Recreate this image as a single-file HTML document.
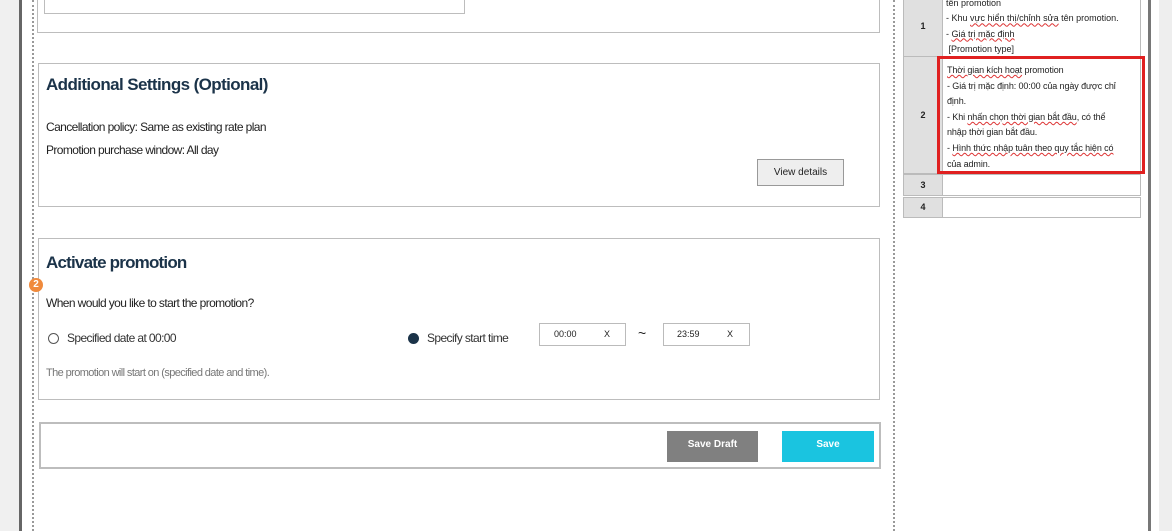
<!DOCTYPE html>
<html><head><style>
*{box-sizing:border-box}
body{margin:0;width:1172px;height:531px;position:relative;overflow:hidden;background:#fff;font-family:"Liberation Sans",sans-serif;color:#222}
.a{position:absolute}
.box{position:absolute;border:1px solid #bdbdbd;background:#fff}
.h{font-weight:bold;color:#1b3349;font-size:17px;letter-spacing:-0.6px}
.t{font-size:12px;letter-spacing:-0.6px}
.td{position:absolute;border:1px solid #bbb;font-size:9px;line-height:15.6px}
.num{background:#e0e0e0;text-align:center;font-weight:bold}
.sq{text-decoration:underline wavy #d33;text-decoration-thickness:1px}
</style></head><body>
<div class="a" style="left:0;top:0;width:19px;height:531px;background:#f0f0f0"></div>
<div class="a" style="left:19px;top:0;width:3px;height:531px;background:#666"></div>
<div class="a" style="left:32px;top:0;height:531px;border-left:2px dotted #999"></div>
<div class="a" style="left:893px;top:0;height:531px;border-left:2px dotted #999"></div>
<div class="a" style="left:1148px;top:0;width:3px;height:531px;background:#777"></div>
<div class="a" style="left:1159px;top:0;width:13px;height:531px;background:#eee"></div>

<div class="box" style="left:37px;top:-5px;width:843px;height:38px"></div>
<div class="box" style="left:44px;top:-5px;width:421px;height:19px"></div>

<div class="box" style="left:38px;top:63px;width:842px;height:144px"></div>
<div class="a h" style="left:46px;top:75px">Additional Settings (Optional)</div>
<div class="a t" style="left:46px;top:120px">Cancellation policy: Same as existing rate plan</div>
<div class="a t" style="left:46px;top:143px">Promotion purchase window: All day</div>
<div class="a" style="left:757px;top:159px;width:87px;height:27px;border:1px solid #999;background:#eee;font-size:10px;text-align:center;line-height:25px">View details</div>

<div class="box" style="left:38px;top:238px;width:842px;height:162px"></div>
<div class="a h" style="left:46px;top:253px;letter-spacing:-0.8px">Activate promotion</div>
<div class="a" style="left:29px;top:278px;width:14px;height:14px;border-radius:50%;background:#f08a3c;color:#fff;font-size:10px;font-weight:bold;text-align:center;line-height:14px">2</div>
<div class="a t" style="left:46px;top:296px">When would you like to start the promotion?</div>
<div class="a" style="left:48px;top:333px;width:11px;height:11px;border:1px solid #555;border-radius:50%"></div>
<div class="a t" style="left:67px;top:331px;color:#333">Specified date at 00:00</div>
<div class="a" style="left:408px;top:333px;width:11px;height:11px;background:#1b3349;border-radius:50%"></div>
<div class="a t" style="left:427px;top:331px;color:#333">Specify start time</div>
<div class="a" style="left:539px;top:323px;width:87px;height:23px;border:1px solid #bbb;font-size:9px;line-height:21px"><span style="margin-left:14px">00:00</span><span style="position:absolute;left:64px">X</span></div>
<div class="a" style="left:638px;top:325px;font-size:14px">~</div>
<div class="a" style="left:663px;top:323px;width:87px;height:23px;border:1px solid #bbb;font-size:9px;line-height:21px"><span style="margin-left:13px">23:59</span><span style="position:absolute;left:63px">X</span></div>
<div class="a t" style="left:46px;top:367px;color:#777;font-size:11px">The promotion will start on (specified date and time).</div>

<div class="box" style="left:39px;top:422px;width:842px;height:47px;border-width:2px"></div>
<div class="a" style="left:667px;top:431px;width:91px;height:31px;background:#808080;color:#fff;font-size:10px;font-weight:bold;text-align:center;line-height:28px">Save Draft</div>
<div class="a" style="left:782px;top:431px;width:92px;height:31px;background:#1ac4e0;color:#fff;font-size:10px;font-weight:bold;text-align:center;line-height:28px">Save</div>

<div class="td num" style="left:903px;top:-5px;width:40px;height:62px;line-height:60px">1</div>
<div class="td" style="left:942px;top:-5px;width:199px;height:62px;padding-left:3px;padding-top:-2px;line-height:15.3px">tên promotion<br>- Khu <span class="sq">vực hiển thị/chỉnh sửa</span> tên promotion.<br>- <span class="sq">Giá trị mặc định</span><br>&nbsp;[Promotion type]</div>
<div class="td num" style="left:903px;top:56px;width:40px;height:118px;line-height:116px">2</div>
<div class="td" style="left:942px;top:56px;width:199px;height:118px;padding:6px 14px 0 4px;letter-spacing:-0.1px"><span class="sq">Thời gian kích hoạt</span> promotion<br>- Giá trị mặc định: 00:00 của ngày được chỉ định.<br>- Khi <span class="sq">nhấn chọn thời gian bắt đầu</span>, có thể nhập thời gian bắt đầu.<br>- <span class="sq">Hình thức nhập tuân theo quy tắc hiện có</span> của admin.</div>
<div class="td num" style="left:903px;top:174px;width:40px;height:22px;line-height:20px">3</div>
<div class="td" style="left:942px;top:174px;width:199px;height:22px"></div>
<div class="td num" style="left:903px;top:197px;width:40px;height:21px;line-height:19px">4</div>
<div class="td" style="left:942px;top:197px;width:199px;height:21px"></div>
<div class="a" style="left:937px;top:56px;width:208px;height:118px;border:3px solid #e02020"></div>
</body></html>
